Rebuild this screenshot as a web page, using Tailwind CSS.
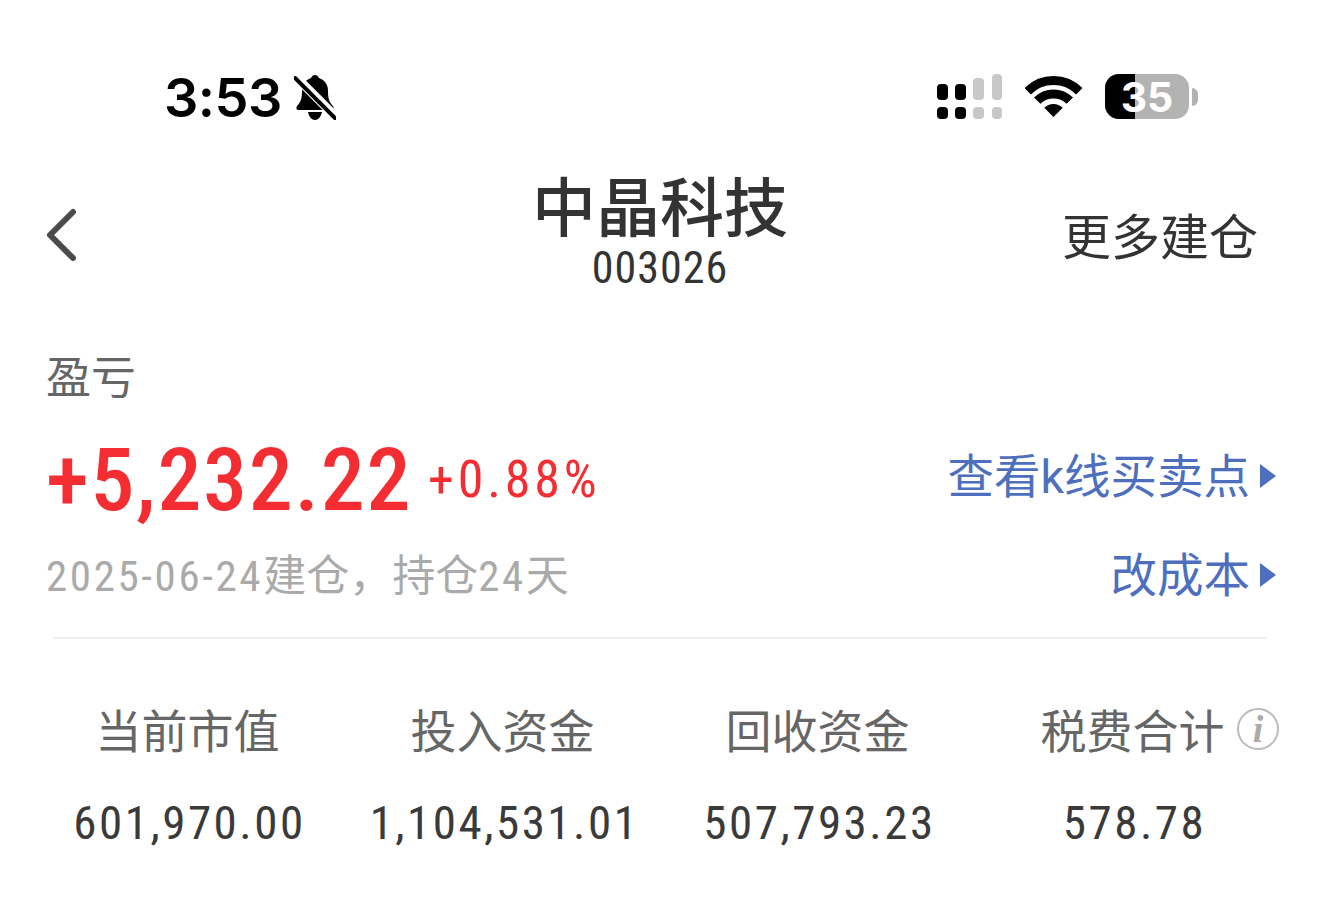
<!DOCTYPE html>
<html>
<head>
<meta charset="UTF-8" />
<script src="https://cdn.jsdelivr.net/npm/@tailwindcss/browser@4"></script>
</head>
<body class="bg-white">
<div class="w-[1320px] h-[904px] overflow-hidden font-['Roboto','Noto_Sans_CJK_SC',sans-serif]">
  <!-- status bar -->
  <div class="h-[160px] pl-[164px] pr-[122px] pt-[70px] flex items-start justify-between">
    <div class="flex items-center gap-[12px] h-[56px]">
      <span class="text-[54px] leading-[56px] font-semibold tracking-[-0.5px] text-black font-['Inter','Roboto',sans-serif]">3:53</span>
      <svg width="42" height="48" viewBox="0 0 42 48"><path d="M21 1c-2 0-3 1-4 3-6 2-9 7-9 13 0 7-1 11-5 15-1 2-1 4 2 4h32c3 0 3-2 2-4-4-4-5-8-5-15 0-6-3-11-9-13-1-2-2-3-4-3zM14 38c1 5 4 8 7 8s6-3 7-8z" fill="#000"/><path d="M1 2l41 41" stroke="#fff" stroke-width="9"/><path d="M1 4l40 40" stroke="#000" stroke-width="4" stroke-linecap="round"/></svg>
    </div>
    <div class="flex items-start gap-[22px] h-[56px] pt-[4px]">
      <svg width="66" height="46" viewBox="0 0 66 46"><rect x="0" y="10" width="11" height="16" rx="4" fill="#000"/><rect x="18" y="10" width="11" height="16" rx="4" fill="#000"/><rect x="0" y="33" width="11" height="12" rx="4" fill="#000"/><rect x="18" y="33" width="11" height="12" rx="4" fill="#000"/><rect x="36" y="4" width="11" height="22" rx="4" fill="#c8c8c8"/><rect x="36" y="33" width="11" height="12" rx="4" fill="#c8c8c8"/><rect x="55" y="0" width="10" height="26" rx="4" fill="#c8c8c8"/><rect x="55" y="33" width="10" height="12" rx="4" fill="#c8c8c8"/></svg>
      <svg width="58" height="42" viewBox="0 0 58 42" class="mt-[2px]"><path d="M2.700 15.200A36.500 36.500 0 0 1 54.300 15.200M12.200 24.700A23 23 0 0 1 44.800 24.700" fill="none" stroke="#000" stroke-width="9"/><path d="M28.500 41L19.300 31.800A13 13 0 0 1 37.700 31.800Z" fill="#000"/></svg>
      <div class="flex items-center gap-[3px]">
        <div class="relative w-[84px] h-[45px] rounded-[14px] bg-[#b3b3b3]">
          <div class="h-full w-[30px] rounded-l-[14px] bg-black"></div>
          <span class="absolute inset-x-0 top-[1px] text-center text-[41px] leading-[45px] font-bold text-white font-['Inter',sans-serif]">35</span>
        </div>
        <div class="w-[6px] h-[18px] rounded-r-full bg-[#b3b3b3]"></div>
      </div>
    </div>
  </div>
  <!-- header -->
  <div class="relative h-[140px]">
    <svg class="absolute left-[44px] top-[46px]" width="34" height="56" viewBox="0 0 34 56"><path d="M29 6L6 29l23 23" fill="none" stroke="#4a4a4a" stroke-width="6" stroke-linecap="round" stroke-linejoin="round"/></svg>
    <div class="text-center text-[64px] leading-[70px] pt-[15px] font-medium text-[#333]">中晶科技</div>
    <div class="text-center text-[44px] leading-[46px] font-stretch-[75%] tracking-[1px] text-[#333]">003026</div>
    <div class="absolute right-[62px] top-[51px] text-[49px] leading-[56px] text-[#333]">更多建仓</div>
  </div>
  <!-- profit -->
  <div class="pl-[46px] pr-[44px] pt-[51px]">
    <div class="text-[45px] leading-[56px] text-[#666]">盈亏</div>
    <div class="flex items-center justify-between mt-[28px]">
      <div class="flex items-center gap-[16px] text-[#f32d32]">
        <span class="text-[88px] leading-[90px] font-medium font-stretch-[75%] tracking-[1.700px]">+5,232.22</span>
        <span class="text-[52px] leading-[56px] font-stretch-[75%] tracking-[3.800px]">+0.88%</span>
      </div>
      <div class="flex items-center gap-[10px] pb-[6px] text-[#4d6fbe] text-[46.500px] leading-[56px]">查看k线买卖点<span class="w-0 h-0 mb-[2px] border-y-[12px] border-y-transparent border-l-[16px] border-l-[#4d6fbe]"></span></div>
    </div>
    <div class="flex items-center justify-between mt-[23px]">
      <div class="text-[43px] leading-[56px] text-[#aaa]"><span class="font-stretch-[75%] tracking-[2.600px]">2025-06-24</span>建仓，持仓<span class="font-stretch-[75%] tracking-[2.600px]">24</span>天</div>
      <div class="flex items-center gap-[10px] text-[#4d6fbe] text-[46.500px] leading-[56px]">改成本<span class="w-0 h-0 mb-[2px] border-y-[12px] border-y-transparent border-l-[16px] border-l-[#4d6fbe]"></span></div>
    </div>
  </div>
  <div class="mx-[54px] mt-[33px] border-t-2 border-[#eee]"></div>
  <!-- stats -->
  <div class="grid grid-cols-4 px-[30px] pt-[65px] text-center">
    <div><div class="text-[46px] leading-[56px] text-[#666]">当前市值</div><div class="mt-[35px] pl-[4px] text-[47px] leading-[56px] font-stretch-[75%] tracking-[2.500px] text-[#3a3a3a]">601,970.00</div></div>
    <div><div class="text-[46px] leading-[56px] text-[#666]">投入资金</div><div class="mt-[35px] pl-[4px] text-[47px] leading-[56px] font-stretch-[75%] tracking-[2.500px] text-[#3a3a3a]">1,104,531.01</div></div>
    <div><div class="text-[46px] leading-[56px] text-[#666]">回收资金</div><div class="mt-[35px] pl-[4px] text-[47px] leading-[56px] font-stretch-[75%] tracking-[2.500px] text-[#3a3a3a]">507,793.23</div></div>
    <div class="relative">
      <div class="text-[46px] leading-[56px] text-[#666]">税费合计</div>
      <div class="absolute left-[262px] top-[4px] w-[42px] h-[42px] rounded-full border-2 border-[#bbb] text-center text-[38px] leading-[38px] font-bold italic text-[#aaa] font-['Liberation_Serif',serif]">i</div>
      <div class="mt-[35px] pl-[4px] text-[47px] leading-[56px] font-stretch-[75%] tracking-[2.500px] text-[#3a3a3a]">578.78</div>
    </div>
  </div>
</div>
</body>
</html>
